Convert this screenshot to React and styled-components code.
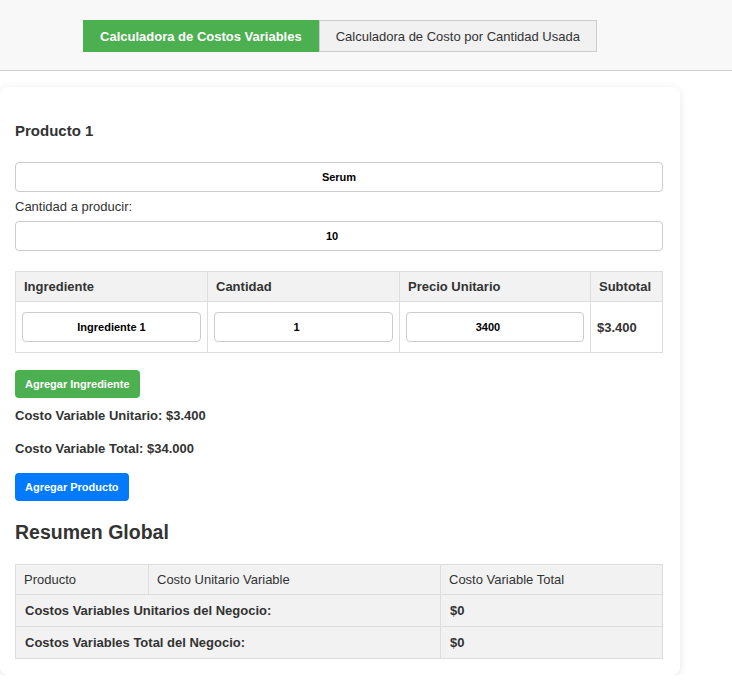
import React, { useState } from 'react'
import styled, { createGlobalStyle } from 'styled-components'

const GlobalStyle = createGlobalStyle`
  body {
    margin: 0;
    background: #fff;
    font-family: "Liberation Sans", Arial, sans-serif;
    font-size: 13px;
    color: #333;
  }
`;

const Header = styled.header`
  background: #f8f8f8;
  border-bottom: 1px solid #cfcfcf;
  padding: 20px 0 18px;
`;

const Tabs = styled.nav`
  width: 680px;
  display: flex;
  justify-content: center;
`;

const Tab = styled.button`
  font-family: inherit;
  font-size: 13px;
  line-height: 15px;
  height: 32px;
  padding: 0 16px;
  border: 1px solid ${p => (p.$active ? '#4caf50' : '#ccc')};
  background: ${p => (p.$active ? '#4caf50' : '#f1f1f1')};
  color: ${p => (p.$active ? '#fff' : '#333')};
  font-weight: ${p => (p.$active ? 700 : 400)};
  cursor: pointer;
`;

const Card = styled.main`
  width: 680px;
  box-sizing: border-box;
  margin-top: 16px;
  background: #fff;
  border-radius: 8px;
  box-shadow: 0 2px 8px rgba(0, 0, 0, 0.1);
  padding: 20px 17px 16px 15px;
`;

const ProductTitle = styled.h3`
  font-size: 15px;
  line-height: 17px;
  margin: 15px 0 23px;
`;

const TextInput = styled.input`
  display: block;
  width: 100%;
  height: 30px;
  box-sizing: border-box;
  border: 1px solid #ccc;
  border-radius: 4px;
  background: #fff;
  text-align: center;
  font-family: inherit;
  font-size: 11px;
  font-weight: 700;
  color: #000;
  padding: 0 ${p => (p.$number ? 22 : 8)}px 0 8px;
`;

const Label = styled.label`
  display: block;
  line-height: 15px;
  padding: 7px 0;
`;

const Table = styled.table`
  width: 100%;
  border-collapse: collapse;
  table-layout: fixed;
  margin-top: ${p => p.$top || 0}px;
`;

const Th = styled.th`
  background: #f2f2f2;
  border: 1px solid #ddd;
  text-align: left;
  padding: 7px 8px;
  line-height: 15px;
  font-weight: ${p => (p.$light ? 400 : 700)};
`;

const Td = styled.td`
  border: 1px solid #ddd;
  padding: 10px 6px;
  line-height: 15px;
  font-weight: 700;
`;

const SumTd = styled.td`
  background: #f2f2f2;
  border: 1px solid #ddd;
  padding: 8px 9px;
  line-height: 15px;
  font-weight: 700;
`;

const ActionButton = styled.button`
  display: block;
  height: 28px;
  padding: 0 10px;
  margin-top: ${p => p.$top}px;
  border: none;
  border-radius: 4px;
  background: ${p => p.$color};
  color: #fff;
  font-family: inherit;
  font-size: 11px;
  font-weight: 700;
  cursor: pointer;
`;

const Total = styled.p`
  margin: ${p => p.$top}px 0 0;
  line-height: 15px;
  font-weight: 700;
`;

const SectionTitle = styled.h2`
  font-size: 19.5px;
  line-height: 22px;
  margin: 20px 0 21px;
`;

const fmt = n => '$' + n.toLocaleString('es-CL')

export default function App() {
  const [tab, setTab] = useState(0)
  const [name, setName] = useState('Serum')
  const [qty, setQty] = useState('10')
  const [items, setItems] = useState([{ name: 'Ingrediente 1', cant: '1', price: '3400' }])

  const unit = items.reduce((s, i) => s + Number(i.cant) * Number(i.price), 0)

  const update = (idx, key, value) =>
    setItems(items.map((it, i) => (i === idx ? { ...it, [key]: value } : it)))

  return (
    <>
      <GlobalStyle />
      <Header>
        <Tabs>
          <Tab $active={tab === 0} onClick={() => setTab(0)}>Calculadora de Costos Variables</Tab>
          <Tab $active={tab === 1} onClick={() => setTab(1)}>Calculadora de Costo por Cantidad Usada</Tab>
        </Tabs>
      </Header>
      <Card>
        <ProductTitle>Producto 1</ProductTitle>
        <TextInput value={name} onChange={e => setName(e.target.value)} />
        <Label>Cantidad a producir:</Label>
        <TextInput $number value={qty} onChange={e => setQty(e.target.value)} />

        <Table $top={20}>
          <colgroup>
            <col style={{ width: 192 }} />
            <col style={{ width: 192 }} />
            <col style={{ width: 191 }} />
            <col />
          </colgroup>
          <thead>
            <tr>
              <Th>Ingrediente</Th>
              <Th>Cantidad</Th>
              <Th>Precio Unitario</Th>
              <Th>Subtotal</Th>
            </tr>
          </thead>
          <tbody>
            {items.map((it, i) => (
              <tr key={i}>
                <Td><TextInput value={it.name} onChange={e => update(i, 'name', e.target.value)} /></Td>
                <Td><TextInput $number value={it.cant} onChange={e => update(i, 'cant', e.target.value)} /></Td>
                <Td><TextInput $number value={it.price} onChange={e => update(i, 'price', e.target.value)} /></Td>
                <Td>{fmt(Number(it.cant) * Number(it.price))}</Td>
              </tr>
            ))}
          </tbody>
        </Table>

        <ActionButton $top={17} $color="#4caf50"
          onClick={() => setItems([...items, { name: 'Ingrediente ' + (items.length + 1), cant: '0', price: '0' }])}>
          Agregar Ingrediente
        </ActionButton>
        <Total $top={10}>Costo Variable Unitario: {fmt(unit)}</Total>
        <Total $top={18}>Costo Variable Total: {fmt(unit * Number(qty))}</Total>
        <ActionButton $top={17} $color="#007bff">Agregar Producto</ActionButton>

        <SectionTitle>Resumen Global</SectionTitle>
        <Table>
          <colgroup>
            <col style={{ width: 133 }} />
            <col style={{ width: 292 }} />
            <col />
          </colgroup>
          <thead>
            <tr>
              <Th $light>Producto</Th>
              <Th $light>Costo Unitario Variable</Th>
              <Th $light>Costo Variable Total</Th>
            </tr>
          </thead>
          <tbody>
            <tr>
              <SumTd colSpan={2}>Costos Variables Unitarios del Negocio:</SumTd>
              <SumTd>$0</SumTd>
            </tr>
            <tr>
              <SumTd colSpan={2}>Costos Variables Total del Negocio:</SumTd>
              <SumTd>$0</SumTd>
            </tr>
          </tbody>
        </Table>
      </Card>
    </>
  )
}
